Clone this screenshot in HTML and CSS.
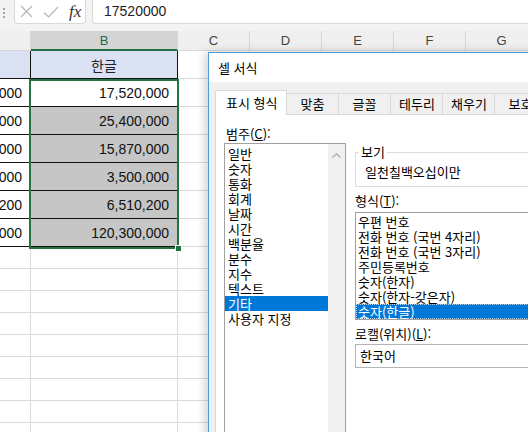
FILE: index.html
```html
<!DOCTYPE html>
<html lang="ko">
<head>
    <meta charset="UTF-8">
    <meta name="viewport" content="width=device-width, initial-scale=1.0">
    <title>셀 서식</title>
    <link rel="stylesheet" href="styles.css">
</head>
<body>
    <div class="formulabar">
        <svg class="grip" width="4" height="12" viewBox="0 0 4 12">
            <circle cx="2" cy="2" r="1" fill="#8c8c8c"/>
            <circle cx="2" cy="6" r="1" fill="#8c8c8c"/>
            <circle cx="2" cy="10" r="1" fill="#8c8c8c"/>
        </svg>
        <div class="fxbox">
            <svg class="ico-x" width="13" height="13" viewBox="0 0 13 13">
                <path d="M1 1L12 12M12 1L1 12" stroke="#b5b5b5" stroke-width="1.2" fill="none"/>
            </svg>
            <svg class="ico-ok" width="16" height="12" viewBox="0 0 16 12">
                <path d="M1 6.5L5.5 11L15 1" stroke="#b5b5b5" stroke-width="1.2" fill="none"/>
            </svg>
            <span class="fx">fx</span>
        </div>
        <div class="formula">17520000</div>
    </div>

    <div class="colheads">
        <div class="ch ch-a"></div>
        <div class="ch ch-b">B</div>
        <div class="ch">C</div>
        <div class="ch">D</div>
        <div class="ch">E</div>
        <div class="ch">F</div>
        <div class="ch">G</div>
    </div>

    <div class="row tall">
        <div class="cell a tbl hdr"></div>
        <div class="cell b tbl hdr">한글</div>
        <div class="cell"></div><div class="cell"></div><div class="cell"></div><div class="cell"></div><div class="cell"></div>
    </div>
    <div class="row tall">
        <div class="cell a tbl">17,520,000</div>
        <div class="cell b tbl">17,520,000</div>
        <div class="cell"></div><div class="cell"></div><div class="cell"></div><div class="cell"></div><div class="cell"></div>
    </div>
    <div class="row tall">
        <div class="cell a tbl">25,400,000</div>
        <div class="cell b tbl pick">25,400,000</div>
        <div class="cell"></div><div class="cell"></div><div class="cell"></div><div class="cell"></div><div class="cell"></div>
    </div>
    <div class="row tall">
        <div class="cell a tbl">15,870,000</div>
        <div class="cell b tbl pick">15,870,000</div>
        <div class="cell"></div><div class="cell"></div><div class="cell"></div><div class="cell"></div><div class="cell"></div>
    </div>
    <div class="row tall">
        <div class="cell a tbl">3,500,000</div>
        <div class="cell b tbl pick">3,500,000</div>
        <div class="cell"></div><div class="cell"></div><div class="cell"></div><div class="cell"></div><div class="cell"></div>
    </div>
    <div class="row tall">
        <div class="cell a tbl">6,510,200</div>
        <div class="cell b tbl pick">6,510,200</div>
        <div class="cell"></div><div class="cell"></div><div class="cell"></div><div class="cell"></div><div class="cell"></div>
    </div>
    <div class="row tall">
        <div class="cell a tbl">120,300,000</div>
        <div class="cell b tbl pick">120,300,000</div>
        <div class="cell"></div><div class="cell"></div><div class="cell"></div><div class="cell"></div><div class="cell"></div>
    </div>
    <div class="row"><div class="cell a"></div><div class="cell b"></div><div class="cell"></div><div class="cell"></div></div>
    <div class="row"><div class="cell a"></div><div class="cell b"></div><div class="cell"></div><div class="cell"></div></div>
    <div class="row"><div class="cell a"></div><div class="cell b"></div><div class="cell"></div><div class="cell"></div></div>
    <div class="row"><div class="cell a"></div><div class="cell b"></div><div class="cell"></div><div class="cell"></div></div>
    <div class="row"><div class="cell a"></div><div class="cell b"></div><div class="cell"></div><div class="cell"></div></div>
    <div class="row"><div class="cell a"></div><div class="cell b"></div><div class="cell"></div><div class="cell"></div></div>
    <div class="row"><div class="cell a"></div><div class="cell b"></div><div class="cell"></div><div class="cell"></div></div>
    <div class="row"><div class="cell a"></div><div class="cell b"></div><div class="cell"></div><div class="cell"></div></div>
    <div class="row"><div class="cell a"></div><div class="cell b"></div><div class="cell"></div><div class="cell"></div></div>

    <div class="selection"><span class="handle"></span></div>

    <div class="dialog">
        <div class="dlg-title">셀 서식</div>
        <div class="dlg-body">
            <div class="tabs">
                <div class="tab on">표시 형식</div>
                <div class="tab">맞춤</div>
                <div class="tab">글꼴</div>
                <div class="tab">테두리</div>
                <div class="tab">채우기</div>
                <div class="tab">보호</div>
            </div>
            <div class="panel">
                <div class="col-left">
                    <div class="lbl">범주(<u>C</u>):</div>
                    <div class="catlist">
                        <div class="items">
                            <div class="item">일반</div>
                            <div class="item">숫자</div>
                            <div class="item">통화</div>
                            <div class="item">회계</div>
                            <div class="item">날짜</div>
                            <div class="item">시간</div>
                            <div class="item">백분율</div>
                            <div class="item">분수</div>
                            <div class="item">지수</div>
                            <div class="item">텍스트</div>
                            <div class="item on">기타</div>
                            <div class="item">사용자 지정</div>
                        </div>
                        <div class="scroll">
                            <svg width="9" height="5" viewBox="0 0 9 5">
                                <path d="M0.5 4.5L4.5 0.8L8.5 4.5" stroke="#a8a8a8" stroke-width="1.2" fill="none"/>
                            </svg>
                        </div>
                    </div>
                </div>
                <div class="col-right">
                    <fieldset class="preview">
                        <legend>보기</legend>
                        <div class="sample">일천칠백오십이만</div>
                    </fieldset>
                    <div class="lbl2">형식(<u>T</u>):</div>
                    <div class="fmtlist">
                        <div class="item">우편 번호</div>
                        <div class="item">전화 번호 (국번 4자리)</div>
                        <div class="item">전화 번호 (국번 3자리)</div>
                        <div class="item">주민등록번호</div>
                        <div class="item">숫자(한자)</div>
                        <div class="item">숫자(한자-갖은자)</div>
                        <div class="item on focus">숫자(한글)</div>
                    </div>
                    <div class="lbl3">로캘(위치)(<u>L</u>):</div>
                    <div class="locale">한국어</div>
                </div>
            </div>
        </div>
    </div>
</body>
</html>
```

FILE: styles.css
```css
* {
    box-sizing: border-box;
}

html, body {
    margin: 0;
    width: 528px;
    height: 432px;
    overflow: hidden;
}

body {
    position: relative;
    font-family: "Liberation Sans", "Noto Sans CJK KR", sans-serif;
    background: #fff;
    color: #222;
}

/* formula bar */
.formulabar {
    display: flex;
    align-items: flex-start;
    height: 31px;
    padding-bottom: 7px;
    background: #f3f3f3;
}

.grip {
    margin: 7px 8px 0 2px;
}

.fxbox {
    display: flex;
    align-items: center;
    width: 72px;
    height: 24px;
    padding-left: 5px;
    background: #fff;
    border: 1px solid #d9d9d9;
    border-top: none;
    border-radius: 0 0 4px 4px;
}

.ico-ok {
    margin-left: 10px;
}

.fx {
    margin-left: 10px;
    font-family: "Liberation Serif", serif;
    font-style: italic;
    font-size: 17px;
    color: #333;
    line-height: 22px;
}

.formula {
    flex: 1;
    height: 24px;
    margin-left: 6px;
    padding-left: 11px;
    background: #fff;
    border: 1px solid #d9d9d9;
    border-top: none;
    border-right: none;
    border-radius: 0 0 0 4px;
    font-size: 14px;
    line-height: 22px;
    color: #1e1e1e;
}

/* sheet */
.colheads {
    display: flex;
    height: 20px;
    background: #efefef;
}

.ch {
    flex: none;
    width: 72px;
    border-right: 1px solid #d6d6d6;
    border-bottom: 1px solid #d6d6d6;
    text-align: center;
    font-size: 13px;
    line-height: 20px;
    color: #444;
}

.ch-a {
    width: 31px;
}

.ch-b {
    width: 147px;
    background: #d4d4d4;
    color: #1d6b47;
    border-bottom: 2px solid #217346;
    line-height: 19px;
}

.row {
    display: flex;
    height: 22px;
}

.row.tall {
    height: 28px;
}

.cell {
    flex: none;
    width: 72px;
    display: flex;
    align-items: center;
    justify-content: flex-end;
    padding-right: 8px;
    border-right: 1px solid #dadada;
    border-bottom: 1px solid #dadada;
    font-size: 14px;
    white-space: nowrap;
    overflow: hidden;
    color: #111;
}

.cell.a {
    width: 31px;
}

.cell.b {
    width: 147px;
}

.cell.tbl {
    border-color: #111;
}

.cell.hdr {
    justify-content: center;
    padding-right: 0;
    background: #d9e1f2;
    font-family: "Noto Sans CJK KR", sans-serif;
    color: #222;
}

.cell.pick {
    background: #c6c6c6;
}

.selection {
    position: absolute;
    left: 29px;
    top: 79px;
    width: 150px;
    height: 170px;
    border: 2px solid #217346;
}

.handle {
    position: absolute;
    right: -5px;
    bottom: -5px;
    width: 7px;
    height: 7px;
    background: #217346;
    border: 1px solid #fff;
}

/* dialog */
.dialog {
    position: absolute;
    left: 208px;
    top: 52px;
    width: 340px;
    height: 400px;
    background: #f0f0f0;
    border: 1px solid #4b9bd6;
    box-shadow: -3px 0 9px rgba(0, 0, 0, 0.18);
    font-family: "Noto Sans CJK KR", sans-serif;
    font-size: 13px;
    color: #000;
}

.dlg-title {
    height: 29px;
    padding-left: 9px;
    background: #fff;
    line-height: 29px;
}

.dlg-body {
    padding: 8px 0 0 6px;
}

.tabs {
    display: flex;
    align-items: flex-end;
    height: 24px;
}

.tab {
    height: 21px;
    min-width: 53px;
    margin-left: -1px;
    padding: 0 8px;
    background: #f0f0f0;
    border: 1px solid #d9d9d9;
    border-bottom: none;
    text-align: center;
    line-height: 20px;
    white-space: nowrap;
}

.tab.on {
    position: relative;
    z-index: 1;
    height: 25px;
    margin-left: 0;
    margin-bottom: -1px;
    padding: 0 10px;
    background: #fff;
    line-height: 24px;
}

.panel {
    display: grid;
    grid-template-columns: 122px 1fr;
    column-gap: 9px;
    align-items: start;
    height: 330px;
    padding: 9px 0 0 8px;
    background: #fff;
    border: 1px solid #d9d9d9;
}

.lbl {
    padding-left: 2px;
    line-height: 19px;
}

.catlist {
    display: flex;
    height: 300px;
    border: 1px solid #a0a0a0;
}

.items {
    flex: 1;
    padding-top: 2px;
}

.item {
    height: 15px;
    padding-left: 3px;
    line-height: 15px;
    white-space: nowrap;
}

.item.on {
    background: #0078d7;
    color: #fff;
}

.item.focus {
    outline: 1px dotted rgba(255, 255, 255, 0.7);
    outline-offset: -1px;
}

.scroll {
    display: flex;
    justify-content: center;
    width: 17px;
    padding-top: 9px;
    background: #f0f0f0;
}

.preview {
    min-width: 0;
    margin: 21px 0 0;
    padding: 5px 9px 6px;
    border: 1px solid #dcdcdc;
}

.preview legend {
    margin-left: -6px;
    padding: 0 2px;
    line-height: 14px;
}

.sample {
    line-height: 16px;
}

.lbl2 {
    margin-top: 6px;
    line-height: 16px;
}

.fmtlist {
    margin-top: 3px;
    padding-top: 1px;
    border: 1px solid #a0a0a0;
}

.fmtlist .item {
    padding-left: 2px;
}

.lbl3 {
    margin-top: 6px;
    line-height: 16px;
}

.locale {
    height: 24px;
    margin-top: 2px;
    padding-left: 4px;
    border: 1px solid #b4b4b4;
    line-height: 22px;
}
```
